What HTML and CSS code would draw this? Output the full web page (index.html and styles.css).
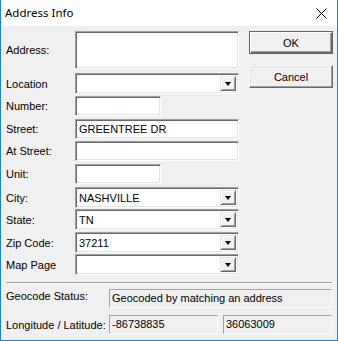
FILE: index.html
```html
<!DOCTYPE html>
<html lang="en">
<head>
    <meta charset="UTF-8">
    <title>Address Info</title>
    <link rel="stylesheet" href="styles.css">
</head>
<body>
    <div class="window">
        <div class="titlebar">
            <span class="title">Address Info</span>
            <svg class="close" width="11" height="11" viewBox="0 0 11 11">
                <path d="M0.5 0.5 L10.5 10.5 M10.5 0.5 L0.5 10.5" stroke="#000" stroke-width="1" fill="none"/>
            </svg>
        </div>

        <div class="dialog">
            <div class="top">
                <div class="form">
                    <label class="lbl tall">Address:</label>
                    <div class="edit textarea"></div>

                    <label class="lbl">Location</label>
                    <div class="combo"><span class="combo-text"></span><span class="combo-btn"><i class="arrow"></i></span></div>

                    <label class="lbl short">Number:</label>
                    <div class="edit narrow"></div>

                    <label class="lbl short">Street:</label>
                    <div class="edit">GREENTREE DR</div>

                    <label class="lbl short">At Street:</label>
                    <div class="edit"></div>

                    <label class="lbl short">Unit:</label>
                    <div class="edit narrow"></div>

                    <label class="lbl">City:</label>
                    <div class="combo"><span class="combo-text">NASHVILLE</span><span class="combo-btn"><i class="arrow"></i></span></div>

                    <label class="lbl">State:</label>
                    <div class="combo"><span class="combo-text">TN</span><span class="combo-btn"><i class="arrow"></i></span></div>

                    <label class="lbl">Zip Code:</label>
                    <div class="combo"><span class="combo-text">37211</span><span class="combo-btn"><i class="arrow"></i></span></div>

                    <label class="lbl">Map Page</label>
                    <div class="combo"><span class="combo-text"></span><span class="combo-btn"><i class="arrow"></i></span></div>
                </div>

                <div class="buttons">
                    <button class="btn default">OK</button>
                    <button class="btn">Cancel</button>
                </div>
            </div>

            <div class="separator"></div>

            <div class="status-grid">
                <span class="lbl status-lbl">Geocode Status:</span>
                <div class="static wide">Geocoded by matching an address</div>

                <span class="lbl">Longitude / Latitude:</span>
                <div class="pair">
                    <div class="static">-86738835</div>
                    <div class="static">36063009</div>
                </div>
            </div>
        </div>
    </div>
</body>
</html>
```

FILE: styles.css
```css
* {
    margin: 0;
    padding: 0;
    box-sizing: border-box;
}

body {
    font-family: "Liberation Sans", Arial, sans-serif;
    font-size: 11px;
    color: #000;
    background: #fff;
}

.window {
    width: 338px;
    height: 341px;
    background: #f0f0f0;
    border-left: 1px solid #1883d7;
    border-right: 1px solid #1883d7;
    border-bottom: 1px solid #1883d7;
    display: flex;
    flex-direction: column;
}

.titlebar {
    height: 26px;
    background: #fff;
    display: flex;
    align-items: center;
    justify-content: space-between;
    padding: 0 10px 1px 4px;
}

.title {
    font-family: "Noto Sans", "Open Sans", sans-serif;
    font-size: 11.5px;
}

.close {
    display: block;
    margin-top: 1px;
}

.dialog {
    padding: 5px 5px 0 5px;
}

.top {
    display: flex;
}

.form {
    display: grid;
    grid-template-columns: 69px 164px;
    grid-template-rows: 42px 23px 23px 22px 23px 23px 22px 23px 22px 21px;
}

.lbl {
    display: flex;
    align-items: center;
    height: 21px;
    white-space: nowrap;
}

.lbl.tall {
    height: 38px;
}

.lbl.short {
    height: 20px;
}

.edit {
    height: 20px;
    width: 164px;
    background: #fff;
    border: 1px solid;
    border-color: #a0a0a0 #fff #fff #a0a0a0;
    box-shadow: inset 1px 1px #696969, inset -1px -1px #e3e3e3;
    padding: 0 3px;
    line-height: 18px;
}

.edit.narrow {
    width: 86px;
}

.edit.textarea {
    height: 38px;
}

.combo {
    height: 21px;
    width: 164px;
    background: #fff;
    border: 1px solid;
    border-color: #a0a0a0 #fff #fff #a0a0a0;
    box-shadow: inset 1px 1px #696969, inset -1px -1px #e3e3e3;
    padding: 2px;
    display: flex;
}

.combo-text {
    flex: 1;
    padding-left: 1px;
    line-height: 16px;
}

.combo-btn {
    width: 16px;
    background: #f0f0f0;
    border: 1px solid;
    border-color: #e3e3e3 #696969 #696969 #e3e3e3;
    box-shadow: inset 1px 1px #fff, inset -1px -1px #a0a0a0;
    display: flex;
    align-items: center;
    justify-content: center;
}

.arrow {
    display: block;
    width: 1px;
    height: 0;
    border-left: 3px solid transparent;
    border-right: 3px solid transparent;
    border-top: 4px solid #000;
    margin-top: 1px;
}

.buttons {
    display: flex;
    flex-direction: column;
    gap: 11px;
    margin-left: 10px;
    margin-right: -1px;
}

.btn {
    width: 84px;
    height: 23px;
    font-family: inherit;
    font-size: 11px;
    color: #000;
    background: #f0f0f0;
    border: 1px solid;
    border-color: #fff #696969 #696969 #fff;
    box-shadow: inset -1px -1px #a0a0a0, inset 1px 1px #e3e3e3;
}

.btn.default {
    border-color: #646464;
    box-shadow: inset 1px 1px #fff, inset -1px -1px #696969, inset -2px -2px #a0a0a0;
}

.separator {
    margin-top: 7px;
    height: 2px;
    border-top: 1px solid #a0a0a0;
    border-bottom: 1px solid #fff;
}

.status-grid {
    margin-top: 5px;
    display: grid;
    grid-template-columns: 103px 223px;
    row-gap: 7px;
}

.status-grid .lbl {
    height: 19px;
}

.status-grid .status-lbl {
    align-items: flex-start;
    padding-top: 1px;
}

.static {
    height: 19px;
    width: 109px;
    border: 1px solid;
    border-color: #a0a0a0 #fff #fff #a0a0a0;
    padding-left: 2px;
    line-height: 17px;
    white-space: nowrap;
}

.static.wide {
    width: 223px;
}

.pair {
    display: flex;
    gap: 5px;
}
```
